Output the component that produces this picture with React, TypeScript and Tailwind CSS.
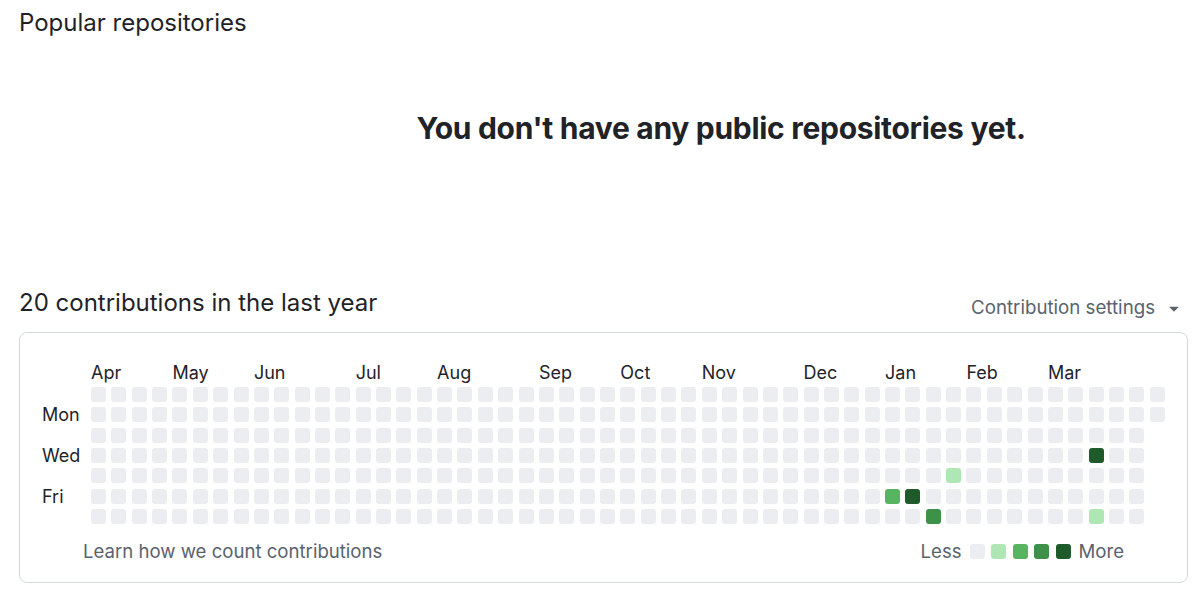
import React from 'react';

const MONTHS = [
  { name: 'Apr', cls: 'col-[1/span_4]' },
  { name: 'May', cls: 'col-[5/span_4]' },
  { name: 'Jun', cls: 'col-[9/span_5]' },
  { name: 'Jul', cls: 'col-[14/span_4]' },
  { name: 'Aug', cls: 'col-[18/span_5]' },
  { name: 'Sep', cls: 'col-[23/span_4]' },
  { name: 'Oct', cls: 'col-[27/span_4]' },
  { name: 'Nov', cls: 'col-[31/span_5]' },
  { name: 'Dec', cls: 'col-[36/span_4]' },
  { name: 'Jan', cls: 'col-[40/span_4]' },
  { name: 'Feb', cls: 'col-[44/span_4]' },
  { name: 'Mar', cls: 'col-[48/span_4]' },
];

const LEVEL_BG = ['bg-[#ebedf0]', 'bg-[#aee6b4]', 'bg-[#57b562]', 'bg-[#3e9148]', 'bg-[#1f5b2a]'];

// week-day -> level, keyed as "week-day"
const ACTIVITY: Record<string, number> = {
  '49-3': 4,
  '42-4': 1,
  '39-5': 2,
  '40-5': 4,
  '41-6': 3,
  '49-6': 1,
};

const WEEKS = 53;

function Cell({ level }: { level: number }) {
  return <div className={`w-[15px] h-[15px] rounded-[3px] ${LEVEL_BG[level]}`} />;
}

function CalendarGrid() {
  const cells: React.ReactNode[] = [];
  for (let w = 0; w < WEEKS; w++) {
    const days = w === WEEKS - 1 ? 2 : 7;
    for (let d = 0; d < days; d++) {
      cells.push(<Cell key={`${w}-${d}`} level={ACTIVITY[`${w}-${d}`] ?? 0} />);
    }
  }
  return (
    <div className="grid grid-flow-col grid-rows-[repeat(7,15px)] auto-cols-[15px] gap-[5.37px]">
      {cells}
    </div>
  );
}

export default function App() {
  return (
    <div
      className="w-[1200px] h-[595px] overflow-hidden bg-white text-[#1f2328] pl-[19px] pr-[12px]"
      style={{ fontFamily: 'Inter, "Noto Sans", sans-serif' }}
    >
      <h2 className="text-[24px] leading-[36px] pt-[5px]">Popular repositories</h2>

      <div className="flex justify-center pl-[235px] pt-[67px] h-[243px]">
        <h3 className="text-[30px] leading-[40px] font-bold tracking-[-0.3px]">
          You don't have any public repositories yet.
        </h3>
      </div>

      <div className="flex items-end justify-between h-[48px]">
        <h2 className="text-[24px] leading-[36px] pb-[11px]">20 contributions in the last year</h2>
        <button className="flex items-center gap-[9px] text-[18.7px] leading-[24px] text-[#59636e] pr-[4px] pb-[12px]">
          Contribution settings
          <svg width="20" height="20" viewBox="0 0 16 16" fill="currentColor">
            <path d="M4.427 7.427l3.396 3.396a.25.25 0 00.354 0l3.396-3.396A.25.25 0 0011.396 7H4.604a.25.25 0 00-.177.427z" />
          </svg>
        </button>
      </div>

      <div className="border border-[#d1d9e0] rounded-[8px] h-[251px] pt-[29px]">
        <div className="flex pl-[71px]">
          <div className="grid grid-cols-[repeat(53,15px)] gap-x-[5.37px] h-[22px] text-[18px] leading-[22px]">
            {MONTHS.map((m) => (
              <span key={m.name} className={`${m.cls} whitespace-nowrap`}>
                {m.name}
              </span>
            ))}
          </div>
        </div>
        <div className="flex mt-[3px]">
          <div className="w-[71px] pl-[22px] grid grid-rows-[repeat(7,15px)] gap-y-[5.37px] text-[18px]">
            <span />
            <span className="leading-[15px] whitespace-nowrap">Mon</span>
            <span />
            <span className="leading-[15px] whitespace-nowrap">Wed</span>
            <span />
            <span className="leading-[15px] whitespace-nowrap">Fri</span>
            <span />
          </div>
          <CalendarGrid />
        </div>
        <div className="flex items-center justify-between px-[63px] mt-[16px] text-[18.6px] leading-[22px] text-[#59636e]">
          <span>Learn how we count contributions</span>
          <div className="flex items-center">
            <span className="mr-[8px]">Less</span>
            <div className="flex gap-[6.5px]">
              {LEVEL_BG.map((bg) => (
                <div key={bg} className={`w-[15px] h-[15px] rounded-[3px] ${bg}`} />
              ))}
            </div>
            <span className="ml-[8px]">More</span>
          </div>
        </div>
      </div>
    </div>
  );
}
